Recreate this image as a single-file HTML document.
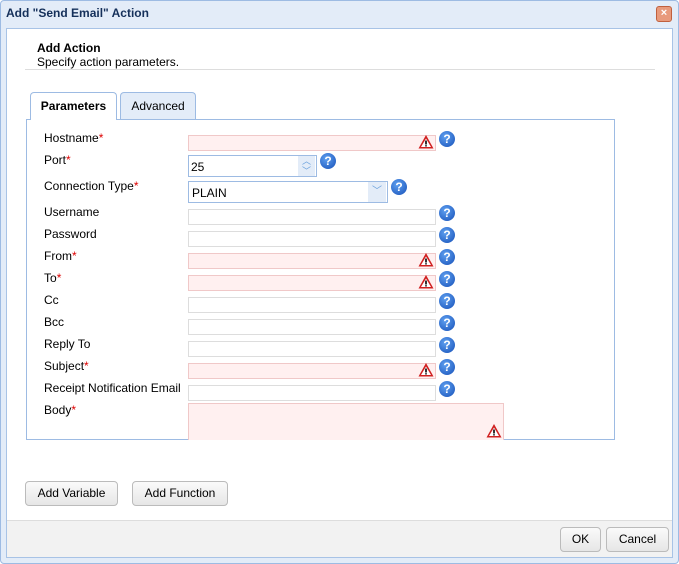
<!DOCTYPE html>
<html><head><style>
*{box-sizing:border-box}
body{margin:0;width:679px;height:564px;font-family:"Liberation Sans",sans-serif;font-size:12px;color:#000;background:#fff;position:relative;overflow:hidden}
.abs{position:absolute}
.dlg{left:0;top:0;width:679px;height:564px;border:1px solid #9dbbe3;border-radius:4px;background:#e3ecf8}
.title{left:6px;top:6px;font-weight:bold;font-size:12px;color:#15305a}
.close{left:656px;top:6px;width:16px;height:16px;border-radius:3px;background:#e89a7c;border:1px solid #c0603e;color:#fff;font-size:11px;line-height:13px;text-align:center;font-weight:bold}
.inner{left:6px;top:28px;width:667px;height:530px;border:1px solid #a8c3e6;background:#fff}
.footer{left:7px;top:520px;width:665px;height:37px;background:#f2f2f2;border-top:1px solid #ddd}
.sep{left:25px;top:69px;width:630px;height:1px;background:#ddd}
.tab{height:27px;border:1px solid #9dbbe3;border-bottom:none;border-radius:4px 4px 0 0;background:#e3ecf8;text-align:center;line-height:26px;font-size:12px}
.panel{left:26px;top:119px;width:589px;height:321px;border:1px solid #9dbbe3;background:#fff}
.lbl{left:44px;font-size:12px}
.req{color:#d00}
.in{left:188px;width:248px;height:16px;border:1px solid #ddd;background:#fff}
.err{background:#fff0f0;border-color:#f0c8c8}
.help{width:16px;height:16px;border-radius:50%;background:radial-gradient(circle at 40% 35%,#5fa0f0,#1650b8);color:#fff;font-weight:bold;font-size:12px;line-height:16px;text-align:center}
.warn{width:0;height:0}
.btn{height:25px;border:1px solid #bbb;border-radius:4px;background:linear-gradient(#fafafa,#e6e6e6);text-align:center;line-height:23px;font-size:12px}
</style></head><body>
<div class="abs dlg"></div>
<div class="abs title">Add "Send Email" Action</div>
<div class="abs close">×</div>
<div class="abs inner"></div>
<div class="abs footer"></div>
<div class="abs" style="left:37px;top:41px;font-weight:bold">Add Action</div>
<div class="abs" style="left:37px;top:55px">Specify action parameters.</div>
<div class="abs sep"></div>
<div class="abs panel"></div>
<div class="abs tab" style="left:30px;top:92px;width:87px;height:28px;background:#fff;font-weight:bold;z-index:2">Parameters</div>
<div class="abs tab" style="left:120px;top:92px;width:76px">Advanced</div>

<div class="abs lbl" style="top:131px">Hostname<span class="req">*</span></div>
<div class="abs in err" style="top:135px;height:16px"></div>
<div class="abs lbl" style="top:153px">Port<span class="req">*</span></div>
<div class="abs in" style="top:155px;width:129px;height:22px;border-color:#9dbbe3;padding:4px 2px">25</div>
<div class="abs" style="left:298px;top:156px;width:17px;height:20px;background:#e3ecf8;color:#6aa0dc;font-size:9px;line-height:10px;text-align:center">︿<br>﹀</div>
<div class="abs lbl" style="top:179px">Connection Type<span class="req">*</span></div>
<div class="abs in" style="top:181px;width:200px;height:22px;border-color:#9dbbe3;padding:4px 3px">PLAIN</div>
<div class="abs" style="left:368px;top:182px;width:18px;height:20px;background:#e3ecf8;color:#6aa0dc;font-size:10px;line-height:20px;text-align:center">﹀</div>

<div class="abs lbl" style="top:205px">Username</div><div class="abs in" style="top:209px"></div>
<div class="abs lbl" style="top:227px">Password</div><div class="abs in" style="top:231px"></div>
<div class="abs lbl" style="top:249px">From<span class="req">*</span></div><div class="abs in err" style="top:253px"></div>
<div class="abs lbl" style="top:271px">To<span class="req">*</span></div><div class="abs in err" style="top:275px"></div>
<div class="abs lbl" style="top:293px">Cc</div><div class="abs in" style="top:297px"></div>
<div class="abs lbl" style="top:315px">Bcc</div><div class="abs in" style="top:319px"></div>
<div class="abs lbl" style="top:337px">Reply To</div><div class="abs in" style="top:341px"></div>
<div class="abs lbl" style="top:359px">Subject<span class="req">*</span></div><div class="abs in err" style="top:363px"></div>
<div class="abs lbl" style="top:381px">Receipt Notification Email</div><div class="abs in" style="top:385px"></div>
<div class="abs lbl" style="top:403px">Body<span class="req">*</span></div>
<div class="abs in err" style="top:403px;width:316px;height:37px;border-bottom:none"></div>

<svg class="abs" style="left:0;top:0" width="679" height="564">
<defs><g id="w"><path d="M8 1 L15.5 14.5 L0.5 14.5 Z" fill="#d02020"/><path d="M8 4.5 L13 13 L3 13 Z" fill="#fff"/><rect x="7.2" y="6.5" width="1.6" height="4" fill="#000"/><rect x="7.2" y="11.2" width="1.6" height="1.3" fill="#000"/></g></defs>
<use href="#w" x="418" y="134"/><use href="#w" x="418" y="252"/><use href="#w" x="418" y="274"/><use href="#w" x="418" y="362"/><use href="#w" x="486" y="423"/>
</svg>

<div class="abs help" style="left:439px;top:131px">?</div>
<div class="abs help" style="left:320px;top:153px">?</div>
<div class="abs help" style="left:391px;top:179px">?</div>
<div class="abs help" style="left:439px;top:205px">?</div>
<div class="abs help" style="left:439px;top:227px">?</div>
<div class="abs help" style="left:439px;top:249px">?</div>
<div class="abs help" style="left:439px;top:271px">?</div>
<div class="abs help" style="left:439px;top:293px">?</div>
<div class="abs help" style="left:439px;top:315px">?</div>
<div class="abs help" style="left:439px;top:337px">?</div>
<div class="abs help" style="left:439px;top:359px">?</div>
<div class="abs help" style="left:439px;top:381px">?</div>

<div class="abs btn" style="left:25px;top:481px;width:93px">Add Variable</div>
<div class="abs btn" style="left:132px;top:481px;width:96px">Add Function</div>
<div class="abs btn" style="left:560px;top:527px;width:41px">OK</div>
<div class="abs btn" style="left:606px;top:527px;width:63px">Cancel</div>
</body></html>
